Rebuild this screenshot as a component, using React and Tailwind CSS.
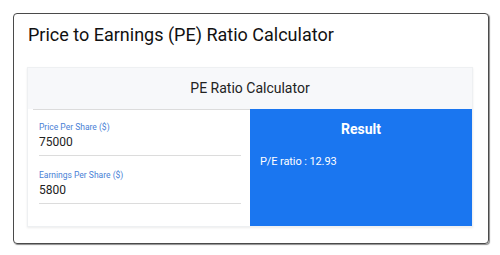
import React from "react";

const Field = ({ label, value }) => (
  <div className="border-b border-[#dcdcdc] pb-[3px]">
    <label className="block text-[8.5px] leading-[12px] text-[#4a7fd6]">{label}</label>
    <div className="text-[12px] leading-[19px] text-[#222]">{value}</div>
  </div>
);

const App = () => {
  return (
    <div className="w-[500px] h-[255px] bg-white pt-[13px] pl-[13px] font-['Roboto',sans-serif]">
      <div className="w-[476px] h-[231px] border border-[#4a4a4a] rounded-[4px] shadow-[1px_1px_1px_rgba(0,0,0,0.45)] px-[13px]">
        {/* Title */}
        <h1 className="text-[18px] leading-[26px] text-[#111] pt-[8px] pl-[1px]">
          Price to Earnings (PE) Ratio Calculator
        </h1>

        {/* Card */}
        <div className="mt-[19px] w-[446px] border border-[#eef0f2] shadow-[0_1px_2px_rgba(0,0,0,0.08)]">
          <div className="h-[41px] bg-[#f7f8fa] flex items-center justify-center text-[14px] text-[#222]">
            PE Ratio Calculator
          </div>
          <div className="flex">
            <div className="w-[217px] border-t border-[#dcdcdc] ml-[5px] pl-[6px] pr-[9px] pt-[11px] flex flex-col gap-[13px]">
              <Field label="Price Per Share ($)" value="75000" />
              <Field label="Earnings Per Share ($)" value="5800" />
            </div>
            <div className="flex-1 h-[117px] bg-[#1a76f0] text-white">
              <div className="text-center text-[14px] font-bold leading-[20px] pt-[10px]">Result</div>
              <div className="text-[11px] pl-[10px] pt-[15px] tracking-[-0.1px]">P/E ratio : 12.93</div>
            </div>
          </div>
        </div>
      </div>
    </div>
  );
};

export default App;
